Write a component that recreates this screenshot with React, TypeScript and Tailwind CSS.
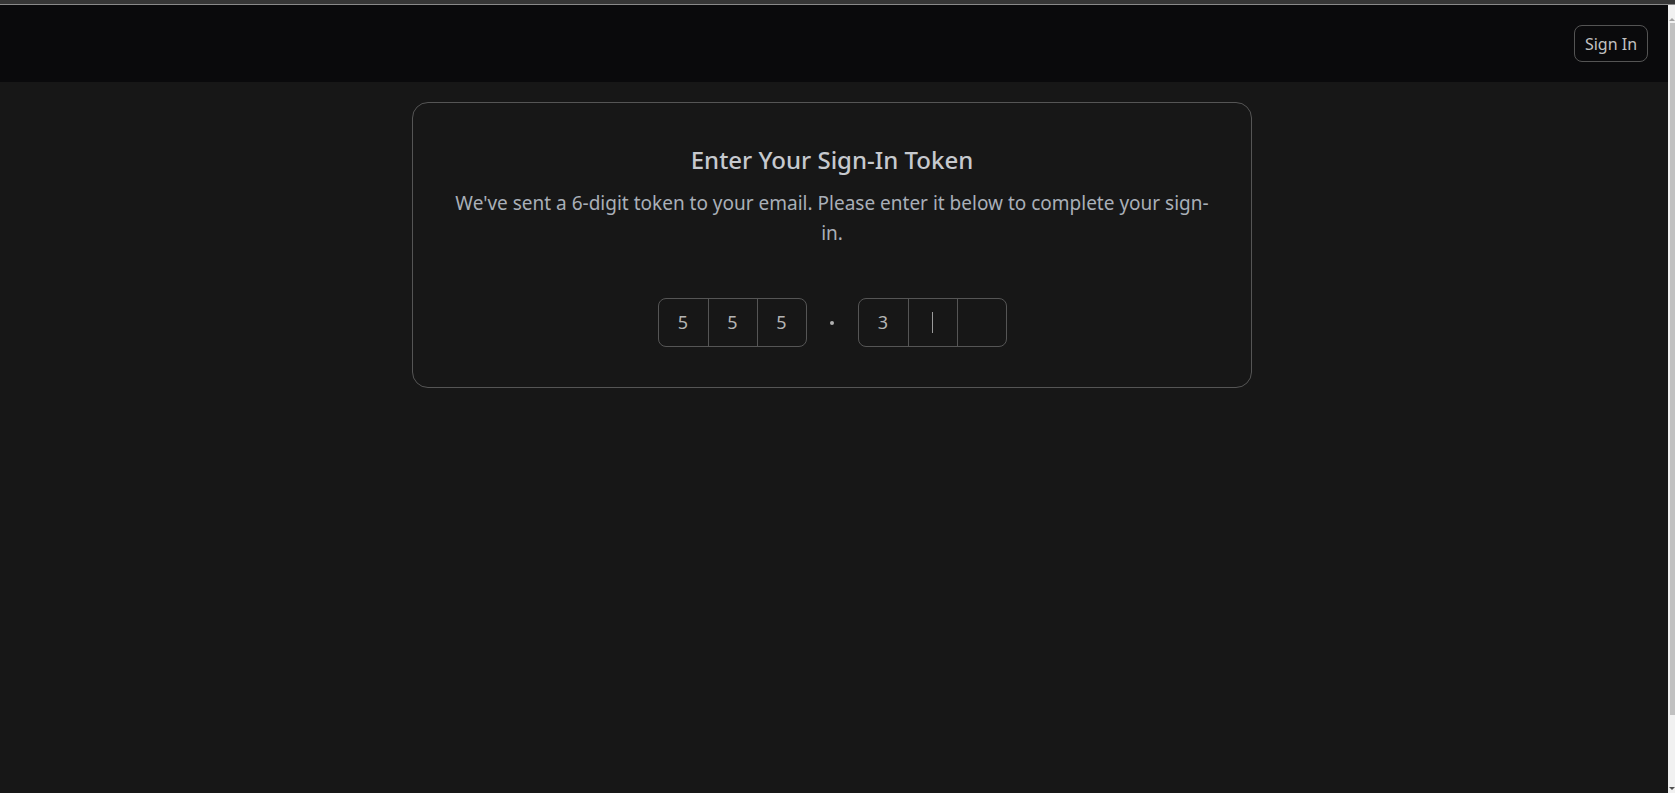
import { Fragment } from "react";

const groups = [
  ["5", "5", "5"],
  ["3", "", ""],
];

function Slot({ value, active, first }: { value: string; active?: boolean; first?: boolean }) {
  return (
    <div
      className={`flex h-full w-[49px] items-center justify-center text-[18px] text-[#b4b4b4] ${
        first ? "" : "border-l border-[#555555]"
      }`}
    >
      {value}
      {active && <span className="h-[21px] w-px bg-[#9a9a9a]" />}
    </div>
  );
}

export default function App() {
  return (
    <div className="flex h-[793px] flex-col overflow-hidden bg-[#171717] font-['Noto_Sans',sans-serif]">
      <div className="h-[5px] shrink-0 border-b border-[#8a8a8a] bg-[#363636]" />
      <div className="flex min-h-0 flex-1">
        <div className="flex min-w-0 flex-1 flex-col">
          <header className="flex h-[77px] shrink-0 items-center justify-end bg-[#0a0a0c] pr-5">
            <button className="h-[37px] w-[74px] rounded-lg border border-[#545454] text-[16px] text-[#c2c2c2]">
              Sign In
            </button>
          </header>
          <main className="pt-5 pr-1">
            <section className="mx-auto w-[840px] rounded-2xl border border-[#555555] bg-[#171717] px-10 pt-[41px] pb-10 text-center">
              <h1 className="text-[24px] font-medium leading-8 text-[#c6c9ce]">Enter Your Sign-In Token</h1>
              <p className="mt-3 text-[19px] leading-[30px] text-[#a9afb8]">
                We've sent a 6-digit token to your email. Please enter it below to complete your sign-in.
              </p>
              <div className="mt-[50px] flex items-center justify-center">
                {groups.map((group, gi) => (
                  <Fragment key={gi}>
                    {gi > 0 && (
                      <div className="flex w-[51px] items-center justify-center">
                        <span className="h-[4px] w-[4px] rounded-full bg-[#b0b0b0]" />
                      </div>
                    )}
                    <div className="flex h-[49px] rounded-lg border border-[#555555]">
                      {group.map((v, i) => (
                        <Slot key={i} value={v} first={i === 0} active={gi === 1 && i === 1} />
                      ))}
                    </div>
                  </Fragment>
                ))}
              </div>
            </section>
          </main>
        </div>
        <div className="flex w-[7px] shrink-0 flex-col bg-[#f1f1f1]">
          <div className="flex h-[18px] items-end justify-center pb-[2px]">
            <span className="h-0 w-0 border-x-[3px] border-b-[3px] border-x-transparent border-b-[#a3a3a3]" />
          </div>
          <div className="ml-[2px] h-[692px] bg-[#c1c1c1]" />
          <div className="flex flex-1 items-end justify-center pb-[3px]">
            <span className="h-0 w-0 border-x-[3px] border-t-[3px] border-x-transparent border-t-[#505050]" />
          </div>
        </div>
      </div>
    </div>
  );
}
